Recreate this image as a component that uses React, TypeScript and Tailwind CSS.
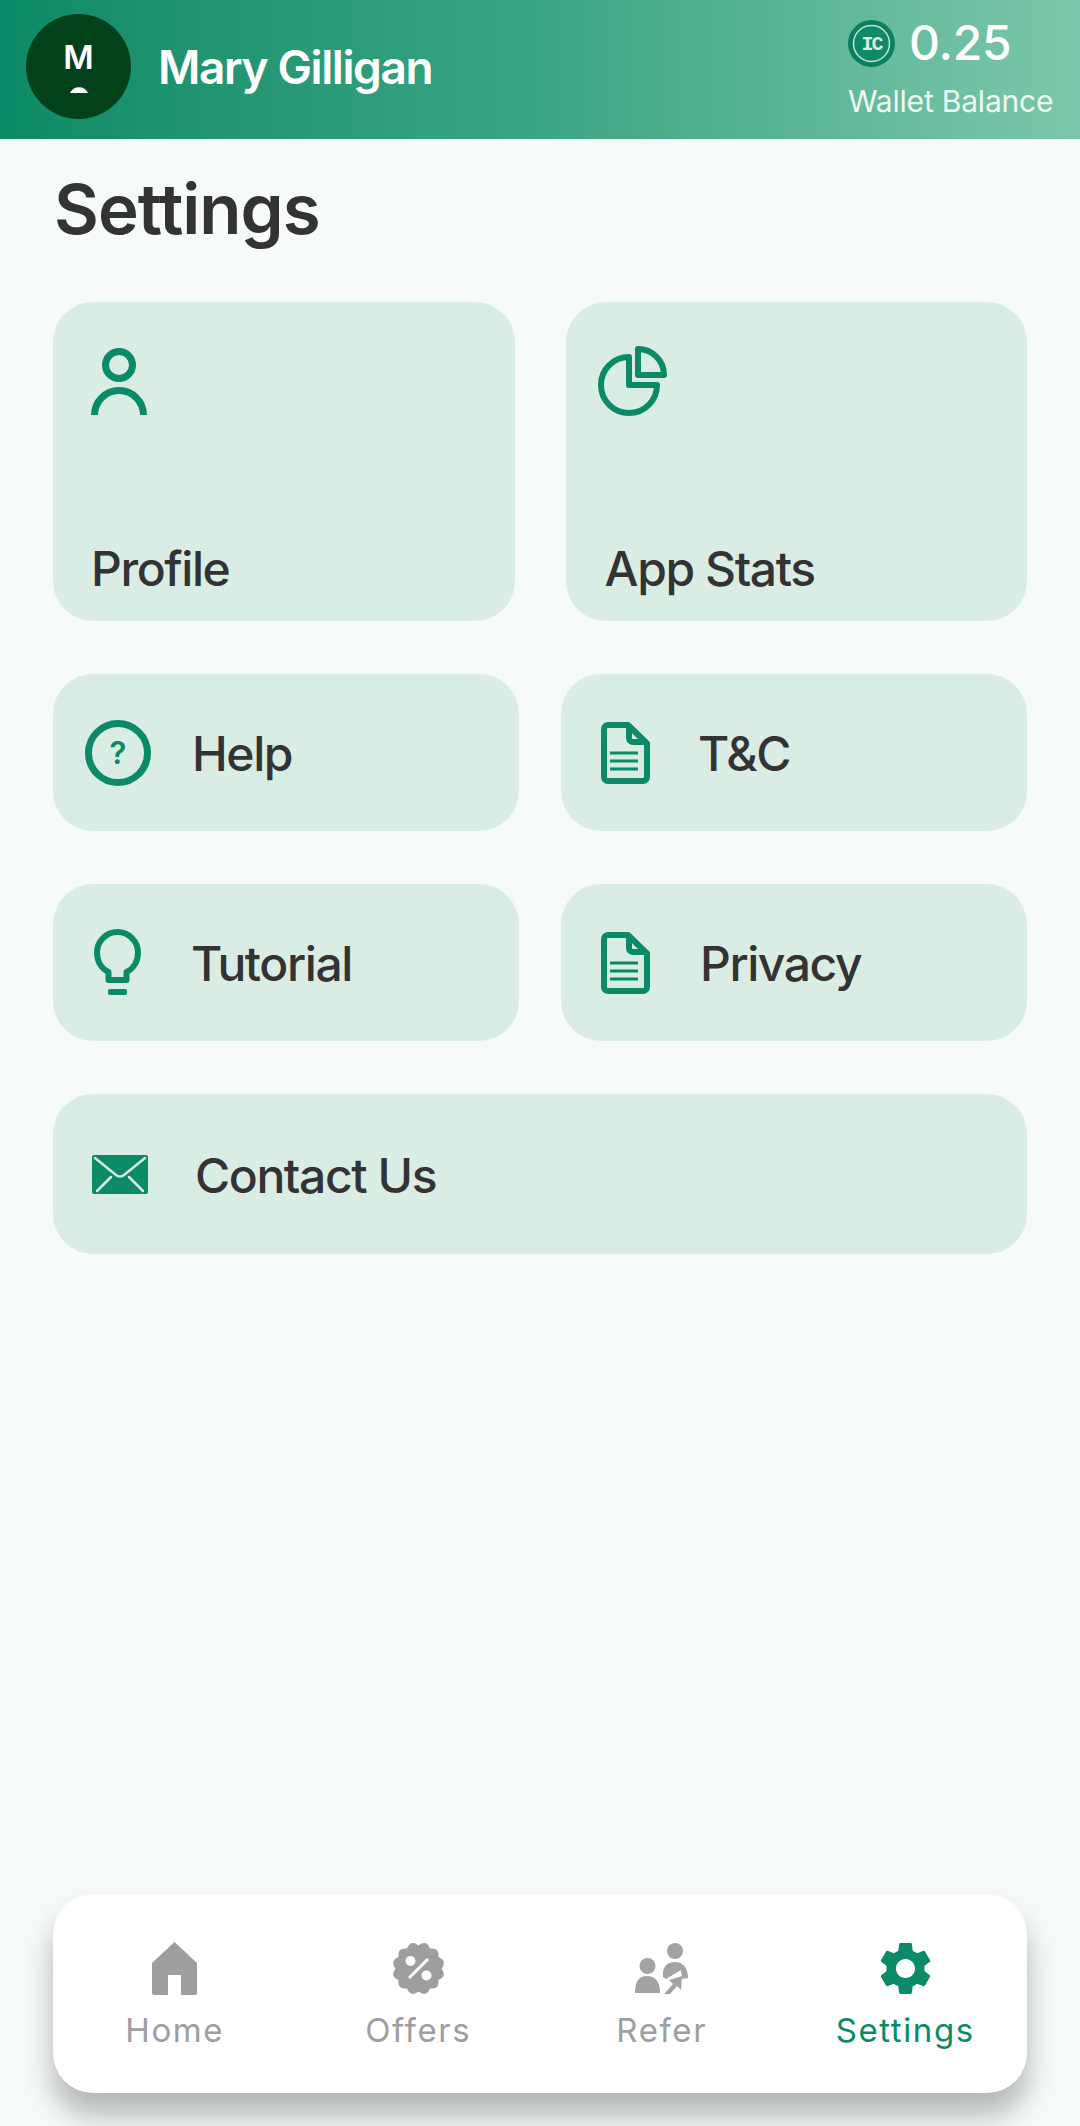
const GREEN = "#0a8a66";

function PersonIcon() {
  return (
    <svg width="56" height="67" viewBox="0 0 56 67" fill="none" stroke={GREEN} strokeWidth="7">
      <circle cx="28" cy="17" r="13.5" />
      <path d="M3.5 67A24.5 24.5 0 0 1 52.5 67" />
    </svg>
  );
}

function PieIcon() {
  return (
    <svg width="69" height="70" viewBox="0 0 69 70" fill="none" stroke={GREEN} strokeWidth="6" strokeLinejoin="round">
      <path d="M31 11A28 28 0 1 0 59 39H31Z" />
      <path d="M40 3A26 26 0 0 1 66 29H40Z" />
    </svg>
  );
}

function HelpIcon() {
  return (
    <svg width="66" height="66" viewBox="0 0 66 66" fill="none">
      <circle cx="33" cy="33" r="29.5" stroke={GREEN} strokeWidth="7" />
      <text x="33" y="44" textAnchor="middle" fontSize="31" fontWeight="600" fontFamily="Inter, sans-serif" fill={GREEN}>?</text>
    </svg>
  );
}

function DocIcon() {
  return (
    <svg width="49" height="62" viewBox="0 0 49 62" fill="none" stroke={GREEN}>
      <path strokeWidth="6" strokeLinejoin="round" d="M7 3H27L46 21.5V55A4 4 0 0 1 42 59H7A4 4 0 0 1 3 55V7A4 4 0 0 1 7 3Z" />
      <path strokeWidth="6" d="M28 3V16A4 4 0 0 0 32 20H46" />
      <path strokeWidth="3" d="M9 31H37M9 39H37M9 47H37" />
    </svg>
  );
}

function BulbIcon() {
  return (
    <svg width="47" height="67" viewBox="0 0 47 67" fill="none">
      <path stroke={GREEN} strokeWidth="6" strokeLinejoin="round" d="M14.5 51V43C7 39.5 3 32 3 23.5A20.5 20.5 0 0 1 44 23.5C44 32 40 39.5 32.5 43V51Z" />
      <rect x="14" y="60" width="19" height="6" rx="2" fill={GREEN} />
    </svg>
  );
}

function MailIcon() {
  return (
    <svg width="56" height="39" viewBox="0 0 56 39">
      <rect width="56" height="39" rx="2" fill={GREEN} />
      <path d="M3 3L24 20Q28 23 32 20L53 3M5 36L19 22M51 36L37 22" fill="none" stroke="#daede4" strokeWidth="2.5" strokeLinecap="round" />
    </svg>
  );
}

function HomeIcon() {
  return (
    <svg width="45" height="53" viewBox="0 0 45 53" fill="#9e9e9e">
      <path d="M22.5 0L45 21V51A2 2 0 0 1 43 53H29V33H16V53H2A2 2 0 0 1 0 51V21Z" />
    </svg>
  );
}

// scalloped badge outline
function badgePath() {
  const n = 12;
  const cx = 26.5;
  const cy = 26.5;
  let d = "";
  for (let i = 0; i < n; i++) {
    const a = (i / n) * Math.PI * 2 - Math.PI / 2;
    const b = ((i + 0.5) / n) * Math.PI * 2 - Math.PI / 2;
    const c = ((i + 1) / n) * Math.PI * 2 - Math.PI / 2;
    const x0 = cx + 23 * Math.cos(a);
    const y0 = cy + 23 * Math.sin(a);
    const qx = cx + 30 * Math.cos(b);
    const qy = cy + 30 * Math.sin(b);
    const x1 = cx + 23 * Math.cos(c);
    const y1 = cy + 23 * Math.sin(c);
    d += (i === 0 ? `M${x0} ${y0}` : "") + `Q${qx} ${qy} ${x1} ${y1}`;
  }
  return d + "Z";
}

function OffersIcon() {
  return (
    <svg width="53" height="53" viewBox="0 0 53 53">
      <path d={badgePath()} fill="#9e9e9e" />
      <circle cx="18.5" cy="19" r="5" fill="#fff" />
      <circle cx="34.5" cy="33.5" r="5" fill="#fff" />
      <path d="M17 36L36 17" stroke="#fff" strokeWidth="3" />
    </svg>
  );
}

function ReferIcon() {
  return (
    <svg width="53" height="51" viewBox="0 0 53 51" fill="#a3a3a3">
      <circle cx="12.5" cy="23" r="8" />
      <path d="M0 50C0 38 4 33 12 33C20 33 25 38 25 50Z" />
      <circle cx="40" cy="8" r="8" />
      <path d="M28 34C27 24 32 19 40 19C48 19 53 25 53 35L47 36L46 27L31 36Z" />
      <path d="M29 51L38 41L34 37L47 33L46 47L42 43L35 51Z" />
    </svg>
  );
}

function GearIcon() {
  return (
    <svg width="53" height="53" viewBox="2.3 2 19.4 20" fill={GREEN}>
      <path d="M19.14 12.94c.04-.3.06-.61.06-.94 0-.32-.02-.64-.07-.94l2.03-1.58c.18-.14.23-.41.12-.61l-1.92-3.32c-.12-.22-.37-.29-.59-.22l-2.39.96c-.5-.38-1.03-.7-1.62-.94l-.36-2.54c-.04-.24-.24-.41-.48-.41h-3.84c-.24 0-.43.17-.47.41l-.36 2.54c-.59.24-1.13.57-1.62.94l-2.39-.96c-.22-.08-.47 0-.59.22L2.74 8.87c-.12.21-.08.47.12.61l2.03 1.58c-.05.3-.09.63-.09.94s.02.64.07.94l-2.03 1.58c-.18.14-.23.41-.12.61l1.92 3.32c.12.22.37.29.59.22l2.39-.96c.5.38 1.03.7 1.62.94l.36 2.54c.05.24.24.41.48.41h3.84c.24 0 .44-.17.47-.41l.36-2.54c.59-.24 1.13-.56 1.62-.94l2.39.96c.22.08.47 0 .59-.22l1.92-3.32c.12-.22.07-.47-.12-.61l-2.01-1.58zM12 15.6c-1.98 0-3.6-1.62-3.6-3.6s1.62-3.6 3.6-3.6 3.6 1.62 3.6 3.6-1.62 3.6-3.6 3.6z" />
    </svg>
  );
}

function Coin() {
  return (
    <svg width="47" height="47" viewBox="0 0 47 47">
      <circle cx="23.5" cy="23.5" r="23.5" fill="#0b7f5f" />
      <circle cx="23.5" cy="23.5" r="18" fill="#0f8a68" stroke="#b9e3d3" strokeWidth="1.5" />
      <text x="23.5" y="30" textAnchor="middle" fontSize="20" fontWeight="700" fontFamily="'Liberation Mono', monospace" letterSpacing="-2" fill="#d9efe6">IC</text>
    </svg>
  );
}

function WideCard({ icon, label, className }: { icon: React.ReactNode; label: string; className: string }) {
  return (
    <div className={`flex h-[319px] flex-col justify-between rounded-[40px] bg-[#daede4] pb-[24px] ${className}`}>
      {icon}
      <span className="text-[48px] leading-[56px] font-[550] tracking-[-1.4px] text-[#333333]">{label}</span>
    </div>
  );
}

function RowCard({ icon, label, iconBox, className }: { icon: React.ReactNode; label: string; iconBox: string; className?: string }) {
  return (
    <div className={`flex h-[157px] items-center rounded-[40px] bg-[#daede4] ${className ?? ""}`}>
      <div className={`flex shrink-0 ${iconBox}`}>{icon}</div>
      <span className="pt-[3px] text-[48px] leading-[56px] font-[550] tracking-[-1.4px] text-[#333333]">{label}</span>
    </div>
  );
}

function NavItem({ icon, label, active }: { icon: React.ReactNode; label: string; active?: boolean }) {
  return (
    <div className="flex flex-col items-center">
      <div className="flex h-[53px] items-center">{icon}</div>
      <span className={`mt-[13px] text-[33px] leading-[44px] tracking-[1.6px] ${active ? "text-[#0a8a66]" : "text-[#9e9e9e]"}`}>{label}</span>
    </div>
  );
}

export default function App() {
  return (
    <div className="flex h-[2126px] w-[1080px] flex-col overflow-hidden bg-[#f6faf8] font-['Inter',sans-serif]">
      <header className="flex h-[139px] shrink-0 items-center justify-between bg-gradient-to-r from-[#0a8a66] via-[#3aa585] to-[#7cc7ab] pr-[27px] pb-[6px] pl-[26px]">
        <div className="flex items-center gap-[27px]">
          <div className="flex h-[105px] w-[105px] flex-col items-center rounded-full bg-[#024119] pt-[24px] text-white">
            <span className="text-[33px] leading-[38px] font-semibold">M</span>
            <svg className="mt-[11px]" width="18" height="6" viewBox="0 0 18 6" fill="#fff">
              <path d="M0 6A10 10 0 0 1 18 6Z" />
            </svg>
          </div>
          <span className="pt-[1px] text-[46px] leading-[56px] font-semibold tracking-[-1.4px] text-white">Mary Gilligan</span>
        </div>
        <div className="flex w-[205px] flex-col">
          <div className="flex items-center gap-[14px]">
            <Coin />
            <span className="text-[48px] leading-[56px] font-medium tracking-[-0.3px] text-white">0.25</span>
          </div>
          <span className="mt-[12px] mb-[-1px] text-[30px] leading-[36px] tracking-[-0.2px] whitespace-nowrap text-[#eefaf5]">Wallet Balance</span>
        </div>
      </header>

      <main className="flex flex-1 flex-col pr-[53px] pl-[53px]">
        <h1 className="mt-[30px] pl-[1px] text-[69px] leading-[80px] font-semibold tracking-[-1px] text-[#333333]">Settings</h1>

        <div className="mt-[53px] grid grid-cols-2 gap-x-[51px]">
          <WideCard icon={<PersonIcon />} label="Profile" className="items-start pt-[46px] pl-[38px]" />
          <WideCard icon={<PieIcon />} label="App Stats" className="items-start pt-[44px] pl-[32px] [&>span]:pl-[7px]" />
        </div>

        <div className="mt-[53px] grid grid-cols-2 gap-x-[42px] gap-y-[53px]">
          <RowCard icon={<HelpIcon />} label="Help" iconBox="w-[139px] pl-[32px]" />
          <RowCard icon={<DocIcon />} label="T&C" iconBox="w-[137px] pl-[40px]" />
          <RowCard icon={<BulbIcon />} label="Tutorial" iconBox="w-[138px] pl-[41px]" />
          <RowCard icon={<DocIcon />} label="Privacy" iconBox="w-[139px] pl-[40px]" />
        </div>

        <RowCard icon={<MailIcon />} label="Contact Us" iconBox="w-[142px] pl-[39px]" className="mt-[53px] h-[160px]" />

        <nav className="mt-auto mb-[33px] grid h-[199px] grid-cols-4 items-start rounded-[40px] bg-white pt-[48px] shadow-[0_22px_30px_rgba(0,0,0,0.28)]">
          <NavItem icon={<HomeIcon />} label="Home" />
          <NavItem icon={<OffersIcon />} label="Offers" />
          <NavItem icon={<ReferIcon />} label="Refer" />
          <NavItem icon={<GearIcon />} label="Settings" active />
        </nav>
      </main>
    </div>
  );
}
